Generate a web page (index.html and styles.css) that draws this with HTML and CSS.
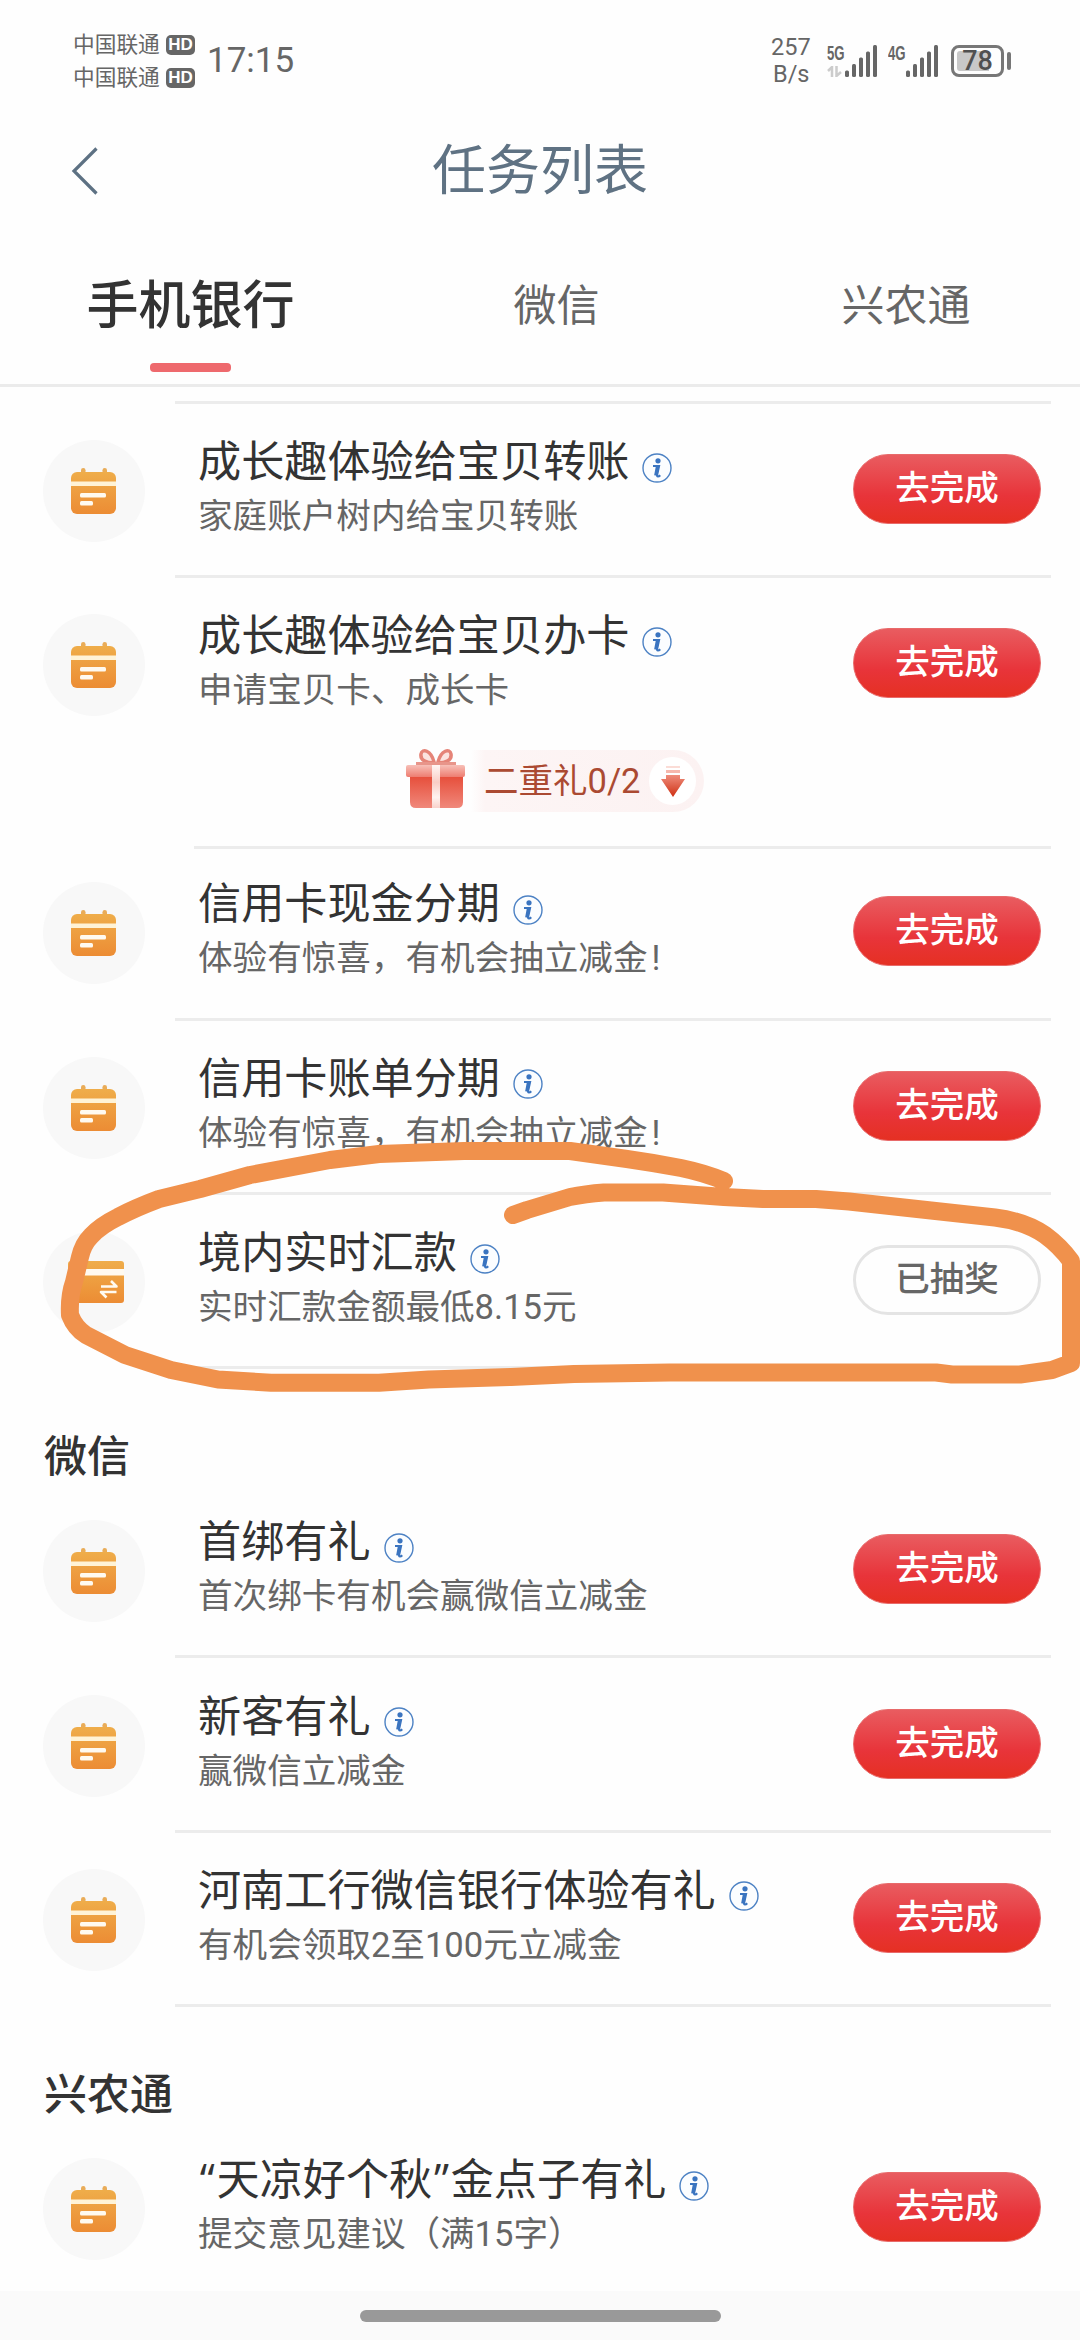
FILE: index.html
```html
<!DOCTYPE html>
<html lang="zh-CN">
<head>
<meta charset="utf-8">
<title>任务列表</title>
<link rel="stylesheet" href="styles.css">
</head>
<body>
<svg class="defs" width="0" height="0" aria-hidden="true">
  <defs>
    <linearGradient id="amber" x1="0" y1="0" x2="0" y2="1"><stop offset="0" stop-color="#efad4a"/><stop offset="1" stop-color="#ec8c34"/></linearGradient>
    <linearGradient id="lid" x1="0" y1="0" x2="0" y2="1"><stop offset="0" stop-color="#f7c0b8"/><stop offset="1" stop-color="#ee7d70"/></linearGradient>
    <linearGradient id="box" x1="0" y1="0" x2="0" y2="1"><stop offset="0" stop-color="#e64c38"/><stop offset="1" stop-color="#f0887b"/></linearGradient>
    <linearGradient id="ribbon" x1="0" y1="0" x2="0" y2="1"><stop offset="0" stop-color="#fff6f4"/><stop offset=".4" stop-color="#f9cdc5"/><stop offset=".75" stop-color="#fff3f0"/><stop offset="1" stop-color="#f9d2cb"/></linearGradient>
    <linearGradient id="down" x1="0" y1="0" x2="0" y2="1"><stop offset="0" stop-color="#ee8d7c"/><stop offset="1" stop-color="#cf2f12"/></linearGradient>
    <symbol id="calendar" viewBox="0 0 46 48">
      <rect x="10" y="1" width="4.500" height="8" rx="2.200" fill="#e9ac58"/><rect x="31.500" y="1" width="4.500" height="8" rx="2.200" fill="#e9ac58"/>
      <rect x="0" y="5" width="45" height="42" rx="6" fill="url(#amber)"/>
      <rect x="0" y="14.500" width="45" height="4.500" fill="#fff3d6"/>
      <rect x="9" y="26" width="26" height="4.600" rx="1.500" fill="#fffaf0"/><rect x="9" y="34" width="13" height="4.600" rx="1.500" fill="#fffaf0"/>
    </symbol>
    <symbol id="info" viewBox="0 0 30 30">
      <circle cx="15" cy="15" r="14" fill="#fbfdff" stroke="#4d82c4" stroke-width="1.400"/>
      <circle cx="16" cy="7.800" r="2.600" fill="#3a74c0"/>
      <path d="M11 13h6l-1.800 8.200q-.5 2.300.8 2.300 1 0 2.200-1.300" fill="none" stroke="#3a74c0" stroke-width="2.200"/>
      <path d="M15.600 13l-1.800 9.500" stroke="#3a74c0" stroke-width="3.400"/>
    </symbol>
    <symbol id="signal" viewBox="0 0 33 33">
      <g fill="#666"><rect x="0" y="25.500" width="4" height="6.500" rx="1.500"/><rect x="7" y="19" width="4" height="13" rx="1.500"/><rect x="14" y="12.500" width="4" height="19.500" rx="1.500"/><rect x="21" y="6.500" width="4" height="25.500" rx="1.500"/><rect x="28" y="0" width="4" height="32" rx="1.500"/></g>
    </symbol>
  </defs>
</svg>
<div class="screen">
  <header class="status">
    <div class="carriers">
      <div class="carrier">中国联通<span class="hd">HD</span></div>
      <div class="carrier">中国联通<span class="hd">HD</span></div>
    </div>
    <div class="time">17:15</div>
    <div class="speed"><span>257</span><span>B/s</span></div>
    <div class="net"><div class="gen"><span>5G</span>
      <svg width="15" height="11" viewBox="0 0 15 11"><path d="M5 11V1L1 5M9.500 0v10L14 6" fill="none" stroke="#ccc" stroke-width="2.500"/></svg></div>
      <svg width="33" height="33"><use href="#signal"/></svg></div>
    <div class="net"><div class="gen"><span>4G</span></div><svg width="33" height="33"><use href="#signal"/></svg></div>
    <div class="battery"><div class="cell"><span>78</span></div><i class="nub"></i></div>
  </header>
  <nav class="titlebar">
    <svg class="back" width="30" height="52" viewBox="0 0 30 52"><path d="M26.500 3.500L4 26l22.500 22.500" fill="none" stroke="#5d7183" stroke-width="3.200"/></svg>
    <h1>任务列表</h1>
  </nav>
  <div class="tabs">
    <div class="tab active">手机银行</div><div class="tab">微信</div><div class="tab">兴农通</div>
  </div>
  <main class="list">
    <div class="rule first"></div>
    <div class="row"><div class="ico"><svg width="46" height="48"><use href="#calendar"/></svg></div><div class="txt"><h3>成长趣体验给宝贝转账<svg class="info"><use href="#info"/></svg></h3><p>家庭账户树内给宝贝转账</p></div><div class="btn">去完成</div></div>
    <div class="rule"></div>
    <div class="row"><div class="ico"><svg width="46" height="48"><use href="#calendar"/></svg></div><div class="txt"><h3>成长趣体验给宝贝办卡<svg class="info"><use href="#info"/></svg></h3><p>申请宝贝卡、成长卡</p></div><div class="btn">去完成</div></div>
    <div class="gift">
      <svg width="60" height="62" viewBox="0 0 60 62">
        <path d="M28 14C25 2 16 0 15 6c-1 6 5 9 13 9zM32 14C35 2 44 0 45 6c1 6-5 9-13 9z" fill="#fbe3df" stroke="#e58478" stroke-width="3.500"/>
        <path d="M10 15.500h40" stroke="#e8958a" stroke-width="3"/>
        <path d="M4 27h53v27q0 6-6 6H10q-6 0-6-6z" fill="url(#box)"/>
        <rect x="0" y="17" width="59" height="12" rx="2" fill="url(#lid)"/>
        <rect x="26" y="17" width="8" height="43" fill="url(#ribbon)"/>
      </svg>
      <div class="pill"><span>二重礼0/2</span><div class="drop"><svg width="24" height="34" viewBox="0 0 24 34"><path d="M5 2h14v2H5z" fill="#fbdcd6"/><path d="M5 6h14v3H5z" fill="#f6b8ad"/><path d="M5 11h14v4h5L12 33 0 15h5z" fill="url(#down)"/></svg></div></div>
    </div>
    <div class="rule short"></div>
    <div class="row after-gift"><div class="ico"><svg width="46" height="48"><use href="#calendar"/></svg></div><div class="txt"><h3>信用卡现金分期<svg class="info"><use href="#info"/></svg></h3><p>体验有惊喜，有机会抽立减金<span class="bang">!</span></p></div><div class="btn">去完成</div></div>
    <div class="rule"></div>
    <div class="row"><div class="ico"><svg width="46" height="48"><use href="#calendar"/></svg></div><div class="txt"><h3>信用卡账单分期<svg class="info"><use href="#info"/></svg></h3><p>体验有惊喜，有机会抽立减金<span class="bang">!</span></p></div><div class="btn">去完成</div></div>
    <div class="rule"></div>
    <div class="row"><div class="ico"><svg class="card" width="56" height="42" viewBox="0 0 56 42"><rect width="56" height="42" rx="3" fill="url(#amber)"/><rect y="8" width="56" height="6.500" fill="#fffaf0"/><path d="M33 25.500h15.500l-5.500-5.500M48.500 31H33l5.500 5.500" fill="none" stroke="#fffaf0" stroke-width="2.600" stroke-linejoin="round"/></svg></div><div class="txt"><h3>境内实时汇款<svg class="info"><use href="#info"/></svg></h3><p>实时汇款金额最低8.15元</p></div><div class="btn done">已抽奖</div></div>
    <div class="rule"></div>
    <h2>微信</h2>
    <div class="row"><div class="ico"><svg width="46" height="48"><use href="#calendar"/></svg></div><div class="txt"><h3>首绑有礼<svg class="info"><use href="#info"/></svg></h3><p>首次绑卡有机会赢微信立减金</p></div><div class="btn">去完成</div></div>
    <div class="rule"></div>
    <div class="row"><div class="ico"><svg width="46" height="48"><use href="#calendar"/></svg></div><div class="txt"><h3>新客有礼<svg class="info"><use href="#info"/></svg></h3><p>赢微信立减金</p></div><div class="btn">去完成</div></div>
    <div class="rule"></div>
    <div class="row"><div class="ico"><svg width="46" height="48"><use href="#calendar"/></svg></div><div class="txt"><h3>河南工行微信银行体验有礼<svg class="info"><use href="#info"/></svg></h3><p>有机会领取2至100元立减金</p></div><div class="btn">去完成</div></div>
    <div class="rule"></div>
    <h2>兴农通</h2>
    <div class="row"><div class="ico"><svg width="46" height="48"><use href="#calendar"/></svg></div><div class="txt"><h3><span><span class="quote">“</span>天凉好个秋<span class="quote">”</span>金点子有礼</span><svg class="info"><use href="#info"/></svg></h3><p>提交意见建议（满15字）</p></div><div class="btn">去完成</div></div>
  </main>
  <footer class="gesture"><i></i></footer>
  <svg class="marker" width="1080" height="260" viewBox="0 1135 1080 260">
    <path d="M724 1181Q705 1173 681 1168Q655 1163 627 1159L570 1151H464L379 1154L330 1160L250 1175L200 1189L159 1199Q135 1208 118 1217Q100 1226 91 1236Q83 1244 80 1257L74 1282Q69 1296 70 1315Q75 1328 86 1335L125 1355L171 1370L218 1379.500L271 1382.700H379L429 1379.500L511 1377L574 1374L670 1372.500H936L952 1374.500H1020L1052 1370L1071 1363V1261Q1060 1246 1045 1235Q1024 1221 995 1217.500L931 1210.500L849 1201.500L816 1199H763L724 1197L663 1192.500H604Q585 1194 570 1197L527 1210L513 1215" fill="none" stroke="#f0914c" stroke-width="18" stroke-linecap="round" stroke-linejoin="round"/>
  </svg>
</div>
</body>
</html>
```
FILE: styles.css
```css
* { box-sizing: border-box; margin: 0; padding: 0; }
body { background: #fefefe; font-family: Roboto, "Noto Sans CJK SC", sans-serif; color: #333; }
.defs { display: block; position: absolute; }
.screen { position: relative; width: 1080px; height: 2340px; display: flex; flex-direction: column; overflow: hidden; }
.status { height: 122px; padding: 0 68px 0 73px; display: flex; align-items: center; color: #666; }
.carriers { width: 134px; }
.carrier { display: flex; align-items: center; justify-content: space-between; width: 122px; height: 33px; font-size: 21.700px; line-height: 30px; }
.hd { width: 29px; height: 20px; border-radius: 5px; background: #666; color: #fff; font: bold 17px/20px "Liberation Sans", sans-serif; text-align: center; }
.time { width: 552px; font-size: 35px; line-height: 40px; }
.speed { width: 68px; padding-left: 12px; display: flex; flex-direction: column; align-items: flex-start; font-size: 23.500px; line-height: 27.500px; }
.speed span:last-child { padding-left: 2px; }
.net { width: 61px; height: 33px; display: flex; }
.gen { width: 18px; display: flex; flex-direction: column; gap: 5px; }
.gen span { font: bold 20px/16px "Liberation Sans", sans-serif; transform: scaleX(.66); transform-origin: left; }
.battery { display: flex; align-items: center; gap: 3px; margin-left: 2px; }
.cell { width: 53px; height: 32px; padding: 3px; border: 3px solid #777; border-radius: 8px; }
.cell span { display: block; width: 41px; height: 20px; border-radius: 3px; background: linear-gradient(90deg, #c8c8c8 32px, transparent 32px); font-size: 27px; line-height: 21px; font-weight: 500; color: #505050; text-align: center; }
.nub { width: 4px; height: 18px; border-radius: 2px; background: #777; }
.titlebar { height: 94px; display: grid; grid-template-columns: 100px 880px 100px; align-items: center; }
.back { justify-self: end; margin-top: 4px; }
.titlebar h1 { font-size: 54px; line-height: 80px; font-weight: 400; color: #5f7283; text-align: center; padding-top: 5px; }
.tabs { height: 171px; display: grid; grid-template-columns: 381px 351px 348px; border-bottom: 3px solid #ebebeb; padding-top: 59px; }
.tab { height: 97px; padding-top: 1px; line-height: 60px; font-size: 43px; color: #666; text-align: center; }
.tab.active { font-size: 52px; font-weight: 500; color: #333; display: flex; flex-direction: column; align-items: center; justify-content: space-between; padding-top: 2px; }
.tab.active::after { content: ""; width: 81px; height: 9px; border-radius: 4px; background: #ee696d; }
.list { height: 1904px; }
.rule { height: 3px; margin: 0 29px 0 175px; background: #ececec; }
.rule.first { margin-top: 14px; }
.rule.short { margin-left: 194px; }
.row { height: 171.300px; padding: 0 40px 0 43px; display: flex; align-items: center; }
.row.after-gift { height: 169px; padding-bottom: 3px; }
.ico { width: 102px; height: 102px; margin-top: 3px; border-radius: 50%; background: #f8f8f8; display: grid; place-items: center; }
.ico .card { margin-right: -3px; }
.txt { flex: 1; padding-left: 53px; padding-bottom: 3px; }
h3 { height: 58px; display: flex; align-items: center; font-size: 43.150px; line-height: 58px; font-weight: 400; white-space: nowrap; }
.quote { display: inline-block; width: 18.500px; line-height: 40px; text-align: center; font-family: "Open Sans", sans-serif; }
.info { width: 30px; height: 30px; margin: 9px 0 0 13px; }
.txt p { margin-top: -1px; padding-bottom: 1px; font-size: 34.600px; line-height: 50px; color: #666; white-space: nowrap; }
.bang { padding-left: 4px; }
.btn { width: 188px; height: 70px; margin-bottom: 1px; border-radius: 35px; border: 1px solid #e86a6a; background: linear-gradient(#e95c60, #e8343a 60%, #e53023); color: #fff; font-size: 34.500px; font-weight: 500; line-height: 66px; text-align: center; }
.btn.done { background: #fefefe; border: 3px solid #e4e4e4; color: #666; line-height: 62px; }
.row .btn { margin-right: -1px; }
.gift { height: 96px; padding: 0 0 0 406px; display: flex; align-items: flex-start; gap: 5px; }
.gift > svg { margin-top: -2px; }
.pill { width: 233px; height: 62px; padding: 0 8px 0 13px; border-radius: 0 31px 31px 0; background: linear-gradient(90deg, #fefefe, #fdf5f5 14px, #fcf2f2); display: flex; align-items: center; justify-content: space-between; font-size: 34.500px; line-height: 58px; color: #ab4a32; }
.drop { width: 47px; height: 48px; border-radius: 50%; background: #fff; display: grid; place-items: center; }
h2 { height: 115px; padding: 58px 0 0 44px; font-size: 43px; line-height: 60px; font-weight: 500; }
.gesture { height: 49px; background: #fafafa; display: flex; justify-content: center; padding-top: 19px; }
.gesture i { width: 361px; height: 12px; border-radius: 6px; background: #999; }
.marker { position: absolute; left: 0; top: 1135px; }
```
